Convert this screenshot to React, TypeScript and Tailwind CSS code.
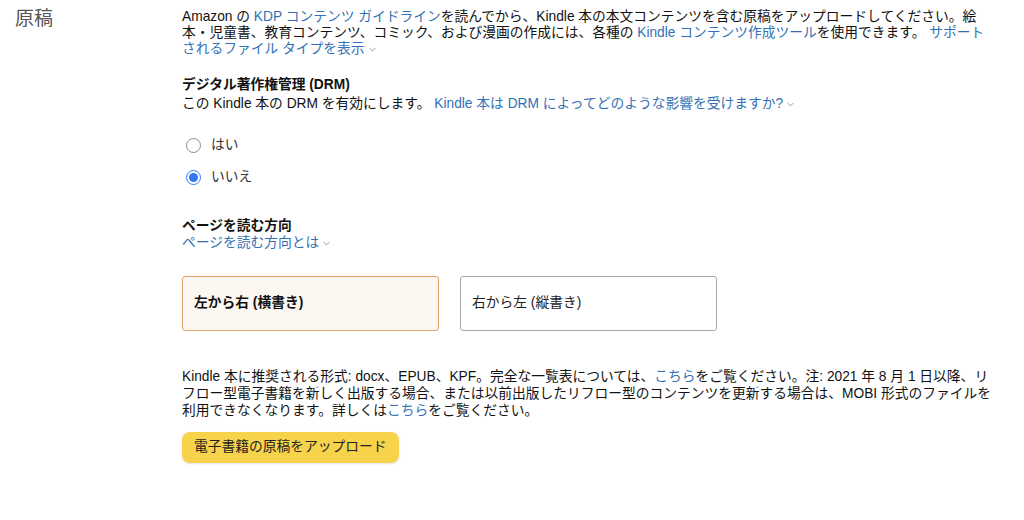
import React from "react";

const Chevron = () => (
  <svg
    viewBox="0 0 10 6"
    className="inline-block w-[7px] h-[5px] ml-[4px] align-middle"
    fill="none"
    stroke="#7a8ea8"
    strokeWidth="1.3"
  >
    <path d="M1 1l4 4 4-4" />
  </svg>
);

const Link = ({ children }: { children: React.ReactNode }) => (
  <a className="text-[#3371b6] cursor-pointer">{children}</a>
);

const Radio = ({ label, checked }: { label: string; checked?: boolean }) => (
  <label className="flex items-center h-5 gap-[10px] pl-[4px]">
    {checked ? (
      <span className="w-[15px] h-[15px] rounded-full border border-[#3478f6] flex items-center justify-center bg-white">
        <span className="w-[9px] h-[9px] rounded-full bg-[#3478f6]" />
      </span>
    ) : (
      <span className="w-[15px] h-[15px] rounded-full border border-[#8c8c8c] bg-white" />
    )}
    <span className="text-[#333]">{label}</span>
  </label>
);

export default function App() {
  return (
    <div
      className="w-[1024px] h-[520px] bg-white flex text-[13.75px] text-[#111] overflow-hidden"
      style={{ fontFamily: '"Liberation Sans", "Noto Sans CJK JP", sans-serif' }}
    >
      <div className="w-[182px] pl-[15px] pt-[7px]">
        <h2 className="text-[19px] text-[#555] leading-6">原稿</h2>
      </div>
      <div className="w-[812px] pt-[9px]">
        <p className="leading-4">
          Amazon の <Link>KDP コンテンツ ガイドライン</Link>を読んでから、Kindle
          本の本文コンテンツを含む原稿をアップロードしてください。絵本・児童書、教育コンテンツ、コミック、および漫画の作成には、各種の{" "}
          <Link>Kindle コンテンツ作成ツール</Link>を使用できます。{" "}
          <Link>
            サポートされるファイル タイプを表示
            <Chevron />
          </Link>
        </p>

        <h3 className="mt-5 font-bold leading-4">デジタル著作権管理 (DRM)</h3>
        <p className="mt-[3px] leading-4">
          この Kindle 本の DRM を有効にします。{" "}
          <Link>
            Kindle 本は DRM によってどのような影響を受けますか?
            <Chevron />
          </Link>
        </p>

        <div className="mt-[23px] flex flex-col gap-3">
          <Radio label="はい" />
          <Radio label="いいえ" checked />
        </div>

        <h3 className="mt-[31px] font-bold leading-4">ページを読む方向</h3>
        <p className="mt-[1px] leading-4">
          <Link>
            ページを読む方向とは
            <Chevron />
          </Link>
        </p>

        <div className="mt-[25px] flex gap-[21px]">
          <button className="w-[257px] h-[55px] rounded-[3px] border border-[#e3a56a] bg-[#fdf7f2] text-left px-[11px] font-bold">
            左から右 (横書き)
          </button>
          <button className="w-[257px] h-[55px] rounded-[3px] border border-[#a8a8a8] bg-white text-left px-[11px] text-[#222]">
            右から左 (縦書き)
          </button>
        </div>

        <p className="mt-[37px] leading-[17px]">
          Kindle 本に推奨される形式: docx、EPUB、KPF。完全な一覧表については、
          <Link>こちら</Link>をご覧ください。注: 2021 年 8 月 1
          日以降、リフロー型電子書籍を新しく出版する場合、または以前出版したリフロー型のコンテンツを更新する場合は、MOBI
          形式のファイルを利用できなくなります。詳しくは<Link>こちら</Link>をご覧ください。
        </p>

        <button className="mt-[13px] h-[31px] px-[12px] rounded-[8px] bg-[#f6d34b] text-[#222] shadow-[0_1px_2px_rgba(0,0,0,0.12)]">
          電子書籍の原稿をアップロード
        </button>
      </div>
    </div>
  );
}
